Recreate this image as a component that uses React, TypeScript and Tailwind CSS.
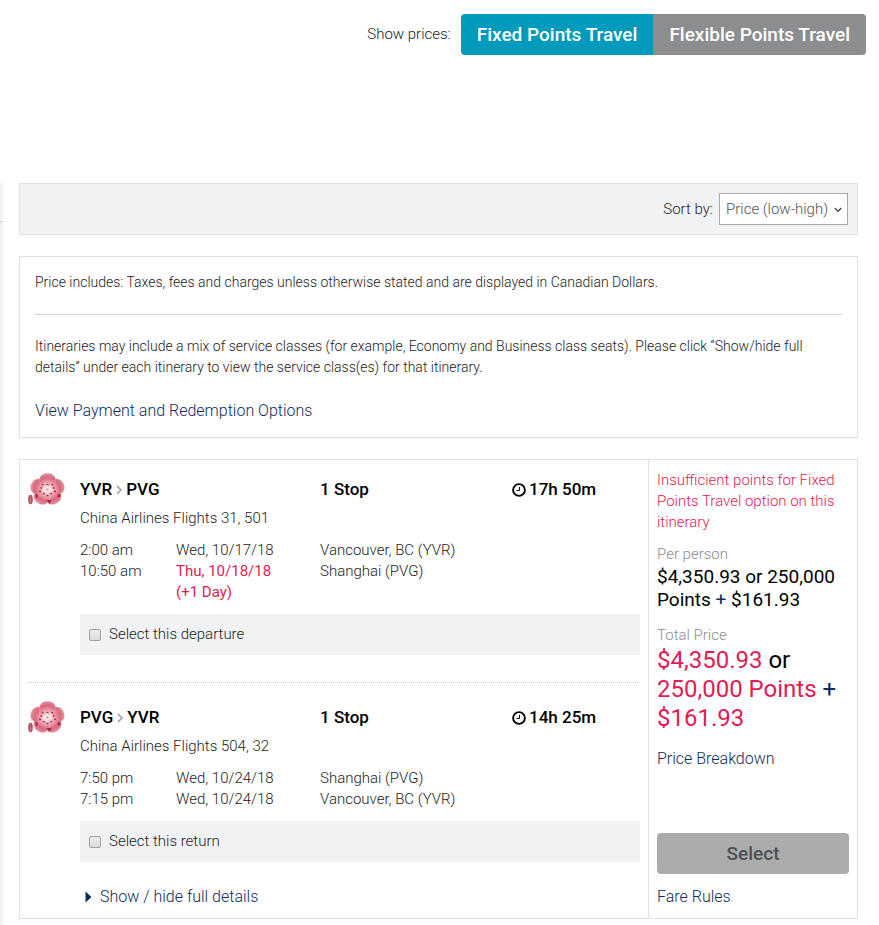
import React, { useState } from 'react';

interface Stop {
  time: string;
  date: string;
  place: string;
  nextDay?: boolean;
}

interface Leg {
  id: string;
  from: string;
  to: string;
  flights: string;
  duration: string;
  selectLabel: string;
  stops: Stop[];
}

const legs: Leg[] = [
  {
    id: 'departure',
    from: 'YVR',
    to: 'PVG',
    flights: 'China Airlines Flights 31, 501',
    duration: '17h 50m',
    selectLabel: 'Select this departure',
    stops: [
      { time: '2:00 am', date: 'Wed, 10/17/18', place: 'Vancouver, BC (YVR)' },
      { time: '10:50 am', date: 'Thu, 10/18/18', place: 'Shanghai (PVG)', nextDay: true },
    ],
  },
  {
    id: 'return',
    from: 'PVG',
    to: 'YVR',
    flights: 'China Airlines Flights 504, 32',
    duration: '14h 25m',
    selectLabel: 'Select this return',
    stops: [
      { time: '7:50 pm', date: 'Wed, 10/24/18', place: 'Shanghai (PVG)' },
      { time: '7:15 pm', date: 'Wed, 10/24/18', place: 'Vancouver, BC (YVR)' },
    ],
  },
];

const petals = [72, 144, 216, 288, 0];
const stamens = [0, 38, 72, 108, 145, 180, 215, 252, 288, 322];

const BlossomLogo: React.FC<{ id: string }> = ({ id }) => (
  <svg viewBox="0 0 37 32" className="h-8 w-[37px] shrink-0" aria-hidden="true">
    <defs>
      <radialGradient id={id} gradientUnits="userSpaceOnUse" cx="0" cy="0" r="17">
        <stop offset="0" stopColor="#fbe6ea" />
        <stop offset="0.35" stopColor="#efabb7" />
        <stop offset="0.7" stopColor="#d9687d" />
        <stop offset="1" stopColor="#e39aa7" />
      </radialGradient>
    </defs>
    <g transform="translate(19.5 16.5) scale(1.06 1)">
      {petals.map((angle) => (
        <path
          key={angle}
          transform={`rotate(${angle})`}
          d="M0 1C-4 -2 -8 -6 -7.600 -10.500C-7.200 -14.500 -3.500 -16.300 0 -16.300C3.500 -16.300 7.200 -14.500 7.600 -10.500C8 -6 4 -2 0 1Z"
          fill={`url(#${id})`}
          stroke="#f3c3cb"
          strokeWidth="0.300"
        />
      ))}
    </g>
    <g transform="translate(19.5 16.5) scale(1.15 0.9)">
      {stamens.map((angle, index) => (
        <g key={angle} transform={`rotate(${angle})`}>
          <path d="M0 -1.500V-5" stroke="#fff" strokeWidth="0.800" />
          <circle cx="0" cy={index % 2 ? -6.8 : -5.6} r="0.9" fill="#b02645" />
        </g>
      ))}
      <circle r="1" fill="#e58a9a" />
    </g>
    <path d="M7.300 20.500L10 22L9.500 24.500L8 25.500ZM32.500 20.500L29.500 22L30 24.500L32 24ZM18.500 27L23.500 27L21.500 31Z" fill="#a62642" />
    <ellipse cx="2.500" cy="26.500" rx="2.300" ry="4.800" fill="#b04c60" />
    <path d="M2.500 22.500V30M1 26.500L2.500 28.500L4 26.500" stroke="#d78f9c" strokeWidth="0.500" fill="none" />
  </svg>
);

const ClockIcon: React.FC = () => (
  <svg viewBox="0 0 14 14" className="h-3.5 w-3.5 shrink-0" fill="none" stroke="currentColor" aria-hidden="true">
    <circle cx="7" cy="7" r="5.900" strokeWidth="1.900" />
    <path d="M7.500 4V7.500H4.500" strokeWidth="1" />
  </svg>
);

const FlightLeg: React.FC<{ leg: Leg }> = ({ leg }) => (
  <div className="flex items-start gap-[15px]">
    <BlossomLogo id={`petal-${leg.id}`} />
    <div className="min-w-0 flex-1 pt-1.5">
      <div className="grid grid-cols-[15fr_12fr_8fr] text-[17px] leading-[21px] font-medium text-black">
        <h3 className="flex items-center gap-1">
          {leg.from}
          <svg viewBox="0 0 6 10" className="h-2.5 w-1.5" fill="none" stroke="#999" strokeWidth="1.500" aria-hidden="true">
            <path d="M1 1L5 5L1 9" />
          </svg>
          {leg.to}
        </h3>
        <div>1 Stop</div>
        <div className="flex items-center gap-[3px]">
          <ClockIcon />
          {leg.duration}
        </div>
      </div>
      <p className="mt-2">{leg.flights}</p>
      <div className="mt-[11px]">
        {leg.stops.map((stop) => (
          <div key={stop.time} className="grid grid-cols-[6fr_9fr_12fr_8fr]">
            <div>{stop.time}</div>
            {stop.nextDay ? (
              <div className="font-normal text-[#e31b54]">
                {stop.date}
                <br />
                (+1 Day)
              </div>
            ) : (
              <div>{stop.date}</div>
            )}
            <div>{stop.place}</div>
          </div>
        ))}
      </div>
      <label className="mt-[11px] flex items-center gap-2 bg-[#f1f2f4] px-[9px] py-2.5">
        <input
          type="checkbox"
          className="h-3 w-3 appearance-none rounded-xs border border-[#a3a3a3] bg-gradient-to-b from-[#ececec] to-[#dcdcdc] checked:bg-[#0099bb]"
        />
        {leg.selectLabel}
      </label>
    </div>
  </div>
);

const PriceTypeToggle: React.FC = () => {
  const [fixed, setFixed] = useState(true);

  return (
    <header className="flex items-center justify-end gap-2.5 pt-3.5 pr-[13px]">
      <span>Show prices:</span>
      <div className="flex overflow-hidden rounded-sm text-[19px] leading-[21px] font-medium text-white">
        <button
          type="button"
          aria-pressed={fixed}
          onClick={() => setFixed(true)}
          className={`px-4 py-2.5 ${fixed ? 'bg-[#009bbc]' : 'bg-[#8c8d8e]'}`}
        >
          Fixed Points Travel
        </button>
        <button
          type="button"
          aria-pressed={!fixed}
          onClick={() => setFixed(false)}
          className={`px-4 py-2.5 ${fixed ? 'bg-[#8c8d8e]' : 'bg-[#009bbc]'}`}
        >
          Flexible Points Travel
        </button>
      </div>
    </header>
  );
};

const SortBar: React.FC = () => (
  <div className="flex items-center justify-end gap-1.5 border border-[#dfe1e6] bg-[#f1f2f4] px-[9px] py-[9px]">
    <label htmlFor="sort">Sort by:</label>
    <div className="relative">
      <select
        id="sort"
        className="h-8 w-[129px] appearance-none border border-[#a6a8ab] bg-white pl-1.5 text-[#505357]"
      >
        <option>Price (low-high)</option>
        <option>Price (high-low)</option>
      </select>
      <svg
        viewBox="0 0 8 6"
        className="pointer-events-none absolute top-3.5 right-1.5 h-1.5 w-2"
        fill="none"
        stroke="#444"
        strokeWidth="1.300"
        aria-hidden="true"
      >
        <path d="M0.700 1L4 4.300L7.300 1" />
      </svg>
    </div>
  </div>
);

const PriceNotes: React.FC = () => (
  <section className="border border-[#dfe1e4] px-[15px] pt-[15px] pb-4 text-sm leading-[21px] shadow-xs">
    <p>Price includes: Taxes, fees and charges unless otherwise stated and are displayed in Canadian Dollars.</p>
    <hr className="my-[21px] border-[#d0d2d4]" />
    <p>
      Itineraries may include a mix of service classes (for example, Economy and Business class seats). Please click
      “Show/hide full details” under each itinerary to view the service class(es) for that itinerary.
    </p>
    <a href="#payment" className="mt-[22px] block text-base leading-[21px] text-[#0c2c5c]">
      View Payment and Redemption Options
    </a>
  </section>
);

const PriceColumn: React.FC = () => (
  <aside className="flex w-[209px] shrink-0 flex-col border-l border-[#dfe1e4] px-2 pt-2.5 pb-[11px]">
    <p className="text-[#e31b54]">Insufficient points for Fixed Points Travel option on this itinerary</p>
    <p className="mt-[11px] text-[#8c8d8e]">Per person</p>
    <p className="text-[19px] leading-[23px] font-normal text-black">
      $4,350.93 or 250,000 Points <span className="text-[#0c2c5c]">+</span> $161.93
    </p>
    <p className="mt-3.5 text-[#8c8d8e]">Total Price</p>
    <p className="text-2xl leading-[29px] font-normal text-[#e31b54]">
      $4,350.93 <span className="text-black">or</span> 250,000 Points <span className="text-[#0c2c5c]">+</span> $161.93
    </p>
    <a href="#breakdown" className="mt-[15px] text-base leading-[21px] text-[#0c2c5c]">
      Price Breakdown
    </a>
    <button
      type="button"
      className="mt-auto rounded-sm bg-[#acacac] py-2.5 text-[19px] leading-[21px] font-medium text-[#4b5056]"
    >
      Select
    </button>
    <a href="#fare-rules" className="mt-3 text-base leading-[21px] text-[#0c2c5c]">
      Fare Rules
    </a>
  </aside>
);

const Itinerary: React.FC = () => (
  <article className="flex border border-[#dfe1e4]">
    <div className="min-w-0 flex-1 px-2 pt-[13px] pb-[11px]">
      <FlightLeg leg={legs[0]} />
      <div className="mt-[27px] border-t border-dotted border-[#cfd1d4] pt-[18px]">
        <FlightLeg leg={legs[1]} />
      </div>
      <button type="button" className="mt-6 ml-[57px] flex items-center gap-2 text-base leading-[21px] text-[#0c2c5c]">
        <svg viewBox="0 0 7 12" className="h-3 w-[7px]" fill="#0c2c5c" aria-hidden="true">
          <path d="M0.500 0.500L6.500 6L0.500 11.500Z" />
        </svg>
        Show / hide full details
      </button>
    </div>
    <PriceColumn />
  </article>
);

export default function App() {
  return (
    <div className="bg-white font-[Roboto,'Liberation_Sans',sans-serif] text-[15px] leading-[21px] font-light text-[#1c1c1c]">
      <PriceTypeToggle />
      <div className="mt-32 flex gap-4">
        {/* edge of the filter panel */}
        <div className="w-[3px] shrink-0 bg-[#f1f2f4] pt-[38px]">
          <div className="border-t border-[#d0d2d4]" />
        </div>
        <main className="mr-[21px] flex min-w-0 flex-1 flex-col gap-[21px] pb-1.5">
          <SortBar />
          <PriceNotes />
          <Itinerary />
        </main>
      </div>
    </div>
  );
}
